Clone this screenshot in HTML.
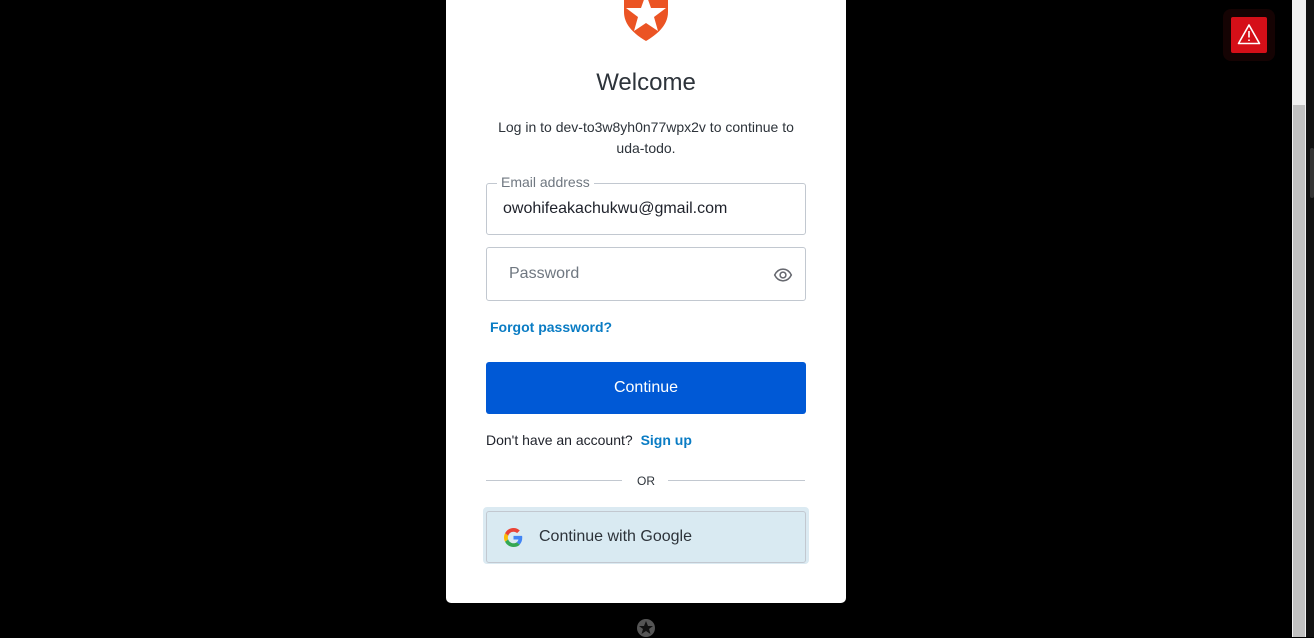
<!DOCTYPE html>
<html><head><meta charset="utf-8"><style>
*{box-sizing:border-box;margin:0;padding:0}
body{width:1314px;height:637px;background:#000;font-family:"Liberation Sans",sans-serif;position:relative;overflow:hidden;color:#1e212a}
.card{position:absolute;left:446px;top:-10px;width:400px;height:613px;background:#fff;border-radius:5px}
.abs{position:absolute}
h1{position:absolute;top:79px;width:100%;text-align:center;font-size:24px;font-weight:400;color:#2d333a}
.sub{position:absolute;top:127px;left:40px;width:320px;text-align:center;font-size:14px;line-height:21px;color:#2d333a}
.field{position:absolute;left:40px;width:320px;border:1px solid #c2c8d0;border-radius:3px}
.lbl{position:absolute;left:10px;top:-10px;background:#fff;padding:0 4px;font-size:14px;color:#6f7780}
.link{color:#0a7cc4;font-weight:700;font-size:14px}
.btn{position:absolute;left:40px;top:372px;width:320px;height:52px;background:#0059d6;border-radius:3px;color:#fff;font-size:16px;text-align:center;line-height:52px}
</style></head><body>
<div class="card">
  <svg class="abs" style="left:176px;top:0" width="48" height="52" viewBox="0 0 48 52">
    <path d="M2 0 H46 V22 C46 36 34 45 24 51 C14 45 2 36 2 22 Z" fill="#eb5424"/>
    <polygon points="24,4 29,18 44,18 32,27 36,41 24,33 12,41 16,27 4,18 19,18" fill="#fff"/>
  </svg>
  <h1>Welcome</h1>
  <div class="sub">Log in to dev-to3w8yh0n77wpx2v to continue to uda-todo.</div>
  <div class="field" style="top:193px;height:52px">
    <span class="lbl">Email address</span>
    <span class="abs" style="left:16px;top:16px;font-size:16px;color:#1e212a">owohifeakachukwu@gmail.com</span>
  </div>
  <div class="field" style="top:257px;height:54px">
    <span class="abs" style="left:22px;top:17px;font-size:16px;color:#6f7780">Password</span>
    <svg class="abs" style="left:286px;top:17px" width="20" height="20" viewBox="0 0 24 24" fill="none" stroke="#65676e" stroke-width="1.8"><path d="M2 12 C5 6 9 5 12 5 C15 5 19 6 22 12 C19 18 15 19 12 19 C9 19 5 18 2 12Z"/><circle cx="12" cy="12" r="3.5"/></svg>
  </div>
  <div class="abs link" style="left:44px;top:329px">Forgot password?</div>
  <div class="btn">Continue</div>
  <div class="abs" style="left:40px;top:442px;font-size:14px;color:#1e212a">Don't have an account? <span class="link" style="margin-left:4px">Sign up</span></div>
  <div class="abs" style="left:40px;top:490px;width:136px;height:1px;background:#c2c8d0"></div>
  <div class="abs" style="left:222px;top:490px;width:137px;height:1px;background:#c2c8d0"></div>
  <div class="abs" style="left:0;width:400px;top:484px;text-align:center;font-size:12px;color:#2d333a">OR</div>
  <div class="abs" style="left:37px;top:517px;width:326px;height:57px;background:#dbeaf2;border-radius:4px"></div>
  <div class="abs" style="left:40px;top:521px;width:320px;height:52px;background:#d9eaf2;border:1px solid #c2c8d0;border-radius:3px">
    <svg class="abs" style="left:17px;top:16px" width="19" height="19" viewBox="0 0 48 48"><path fill="#EA4335" d="M24 9.5c3.5 0 6.6 1.2 9.1 3.6l6.8-6.8C35.8 2.4 30.3 0 24 0 14.6 0 6.6 5.4 2.7 13.3l7.9 6.2C12.5 13.6 17.8 9.5 24 9.5z"/><path fill="#4285F4" d="M46.1 24.5c0-1.6-.1-3.1-.4-4.5H24v9h12.4c-.5 2.9-2.2 5.4-4.7 7l7.600 5.9c4.4-4.1 6.8-10.1 6.8-17.4z"/><path fill="#FBBC05" d="M10.5 28.6c-.5-1.4-.8-3-.8-4.6s.3-3.2.8-4.6l-7.9-6.2C1 16.5 0 20.1 0 24s1 7.5 2.7 10.7l7.8-6.1z"/><path fill="#34A853" d="M24 48c6.5 0 11.9-2.1 15.9-5.8l-7.6-5.9c-2.1 1.4-4.9 2.3-8.3 2.3-6.2 0-11.500-4.2-13.4-9.9l-7.9 6.1C6.6 42.6 14.6 48 24 48z"/></svg>
    <span class="abs" style="left:52px;top:16px;font-size:16px;color:#2d333a">Continue with Google</span>
  </div>
</div>
<svg class="abs" style="left:636px;top:618px" width="20" height="20" viewBox="0 0 20 20"><circle cx="10" cy="10" r="9" fill="#555"/><polygon points="10,3 12,8 17,8 13,11 14.5,16 10,13 5.5,16 7,11 3,8 8,8" fill="#111"/></svg>
<div class="abs" style="left:1223px;top:9px;width:52px;height:52px;background:#150303;border-radius:8px"></div>
<div class="abs" style="left:1231px;top:17px;width:36px;height:36px;background:#d50f18;border-radius:2px">
  <svg class="abs" style="left:6px;top:6px" width="24" height="22" viewBox="0 0 24 22" fill="none" stroke="#fff" stroke-width="1.6"><path d="M12 2 L22.5 20.5 H1.5 Z" stroke-linejoin="round"/><path d="M12 8 V14.5 M12 16.5 V18"/></svg>
</div>
<div class="abs" style="left:1292px;top:0;width:14px;height:637px;background:#f1f1f1"></div>
<div class="abs" style="left:1293px;top:105px;width:12px;height:532px;background:#c1c1c1"></div>
<div class="abs" style="left:1306px;top:0;width:8px;height:637px;background:#111"></div>
<div class="abs" style="left:1310px;top:148px;width:4px;height:50px;background:#333;border-radius:2px"></div>
</body></html>
